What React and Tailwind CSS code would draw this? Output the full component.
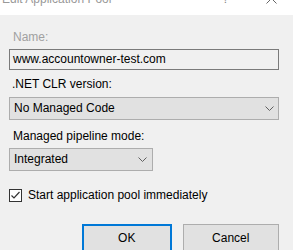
import React from "react";

function Chevron() {
  return (
    <svg width="9" height="5" viewBox="0 0 9 5" className="shrink-0">
      <path d="M0.5 0.5 L4.5 4.5 L8.5 0.5" fill="none" stroke="#606060" strokeWidth="1" />
    </svg>
  );
}

export default function App() {
  const font = { fontFamily: '"Liberation Sans", Arial, sans-serif' };
  return (
    <div
      className="w-[293px] h-[250px] overflow-hidden bg-[#f0f0f0] text-[12px] leading-[15px] text-black"
      style={font}
    >
      {/* Title bar */}
      <div className="h-[15px] bg-white overflow-hidden">
        <div className="flex items-start w-full h-[15px] -mt-[8px] pl-[2px] pr-[16px]">
          <span className="text-[#999999] text-[12px] leading-[15px]">Edit Application Pool</span>
          <span className="ml-auto mr-[37px] text-[#888888] text-[12px] leading-[15px]">?</span>
          <svg width="11" height="11" viewBox="0 0 11 11" className="mt-[1px]">
            <path d="M0.5 0.5 L10.5 10.5 M10.5 0.5 L0.5 10.5" stroke="#666" strokeWidth="1" />
          </svg>
        </div>
      </div>

      <div className="px-[9px] pr-[14px]">
        <div className="mt-[15px] pl-[4px] text-[#a0a0a0]">Name:</div>
        <div className="mt-[4px] h-[21px] border border-[#7a7a7a] bg-[#f0f0f0] flex items-center pl-[3px]">
          www.accountowner-test.com
        </div>

        <div className="mt-[7px] pl-[3px]">.NET CLR version:</div>
        <div className="mt-[5px] h-[23px] border border-[#adadad] bg-[#e1e1e1] flex items-center pl-[4px] pr-[4px]">
          <span>No Managed Code</span>
          <span className="ml-auto flex"><Chevron /></span>
        </div>

        <div className="mt-[9px] pl-[4px]">Managed pipeline mode:</div>
        <div className="mt-[4px] w-[144px] h-[23px] border border-[#adadad] bg-[#e1e1e1] flex items-center pl-[4px] pr-[5px]">
          <span>Integrated</span>
          <span className="ml-auto flex"><Chevron /></span>
        </div>

        <div className="mt-[17px] flex items-center">
          <div className="w-[13px] h-[13px] border border-[#333333] bg-white flex items-center justify-center shrink-0">
            <svg width="11" height="11" viewBox="0 0 11 11">
              <path d="M1.5 5.5 L4 8 L9.5 2" fill="none" stroke="#333" strokeWidth="1.2" />
            </svg>
          </div>
          <span className="ml-[6px]">Start application pool immediately</span>
        </div>

        <div className="mt-[21px] flex pl-[73px]">
          <div className="w-[90px] h-[28px] border-2 border-[#0078d7] bg-[#e1e1e1] flex justify-center pt-[5px]">
            OK
          </div>
          <div className="ml-[11px] w-[97px] h-[28px] border border-[#adadad] bg-[#e1e1e1] flex justify-center pt-[6px]">
            Cancel
          </div>
        </div>
      </div>
    </div>
  );
}
